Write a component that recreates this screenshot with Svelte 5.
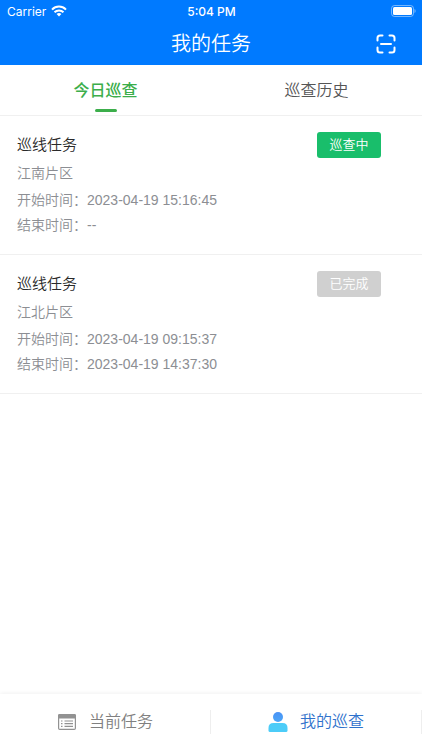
<script>
    let activeTab = 'today';
    let activeNav = 'patrol';

    const tabs = [
        { id: 'today', label: '今日巡查' },
        { id: 'history', label: '巡查历史' }
    ];

    const tasks = [
        { area: '江南片区', start: '2023-04-19 15:16:45', end: '--', done: false },
        { area: '江北片区', start: '2023-04-19 09:15:37', end: '2023-04-19 14:37:30', done: true }
    ];
</script>

<div class="page">
    <header>
        <div class="status">
            <div class="carrier">
                <span>Carrier</span>
                <svg width="16" height="12" viewBox="0 0 16 12" fill="none" stroke="#fff" stroke-width="2">
                    <path d="M1 4.6C5 .6 11 .6 15 4.6" />
                    <path d="M3.5 7.3C6 4.8 10 4.8 12.5 7.3" />
                    <path d="M8 11.5L5.6 9C7 7.7 9 7.7 10.4 9Z" fill="#fff" stroke="none" />
                </svg>
            </div>
            <span class="clock">5:04 PM</span>
            <div class="battery">
                <svg width="25" height="12" viewBox="0 0 25 12">
                    <rect x=".5" y=".5" width="22" height="11" rx="3" fill="none" stroke="#fff" stroke-opacity=".45" />
                    <rect x="2" y="2" width="19" height="8" rx="1.5" fill="#fff" />
                    <path d="M23.5 4C25 4.6 25 7.4 23.5 8Z" fill="#fff" fill-opacity=".5" />
                </svg>
            </div>
        </div>
        <div class="titlebar">
            <h1>我的任务</h1>
            <button class="scan" aria-label="扫一扫">
                <svg width="20" height="20" viewBox="0 0 20 20" fill="none" stroke="#fff" stroke-width="2" stroke-linecap="round">
                    <path d="M1.5 6.5V4Q1.5 1.5 4 1.5H6.5M13.5 1.5H16Q18.5 1.5 18.5 4V6.5M18.5 13.5V16Q18.5 18.5 16 18.5H13.5M6.5 18.5H4Q1.5 18.5 1.5 16V13.5M5 10H15" />
                </svg>
            </button>
        </div>
    </header>

    <div class="tabs">
        {#each tabs as tab}
            <button class="tab" class:active={activeTab === tab.id} on:click={() => activeTab = tab.id}>{tab.label}</button>
        {/each}
    </div>

    <main>
        {#each tasks as task}
            <section class="task">
                <div class="info">
                    <h2>巡线任务</h2>
                    <p class="area">{task.area}</p>
                    <p>开始时间：{task.start}</p>
                    <p>结束时间：{task.end}</p>
                </div>
                <span class="badge" class:done={task.done}>{task.done ? '已完成' : '巡查中'}</span>
            </section>
        {/each}
    </main>

    <nav>
        <button class="navbtn" class:active={activeNav === 'current'} on:click={() => activeNav = 'current'}>
            <svg width="20" height="20" viewBox="0 0 20 20">
                <rect x="1.6" y="2.6" width="16.8" height="14.8" rx="1.2" fill="none" stroke="#929292" stroke-width="1.2" />
                <path d="M1 6.5V3.5Q1 2 2.5 2H17.5Q19 2 19 3.5V6.5Z" fill="#929292" />
                <path d="M4 9H5.5M7.5 9H16M4 11.7H5.5M7.5 11.7H16M4 14.4H5.5M7.5 14.4H16" stroke="#929292" stroke-width="1.2" />
            </svg>
            <span>当前任务</span>
        </button>
        <button class="navbtn" class:active={activeNav === 'patrol'} on:click={() => activeNav = 'patrol'}>
            <svg width="20" height="20" viewBox="0 0 20 20">
                <defs>
                    <linearGradient id="head" x1="0" y1="0" x2="0" y2="1">
                        <stop offset="0" stop-color="#4a92f5" />
                        <stop offset="1" stop-color="#4aa6f8" />
                    </linearGradient>
                </defs>
                <circle cx="10" cy="5" r="5" fill="url(#head)" />
                <path d="M.5 18.5V16Q.5 11 5.5 11H14.5Q19.5 11 19.5 16V18.5Q19.5 20 18 20H2Q.5 20 .5 18.5Z" fill="#4cccf8" />
            </svg>
            <span>我的巡查</span>
        </button>
    </nav>
</div>

<style>
    :global(body) {
        margin: 0;
        background: #fff;
    }

    .page {
        min-height: 100vh;
        display: flex;
        flex-direction: column;
        font-family: "Liberation Sans", "Noto Sans CJK SC", sans-serif;
        font-weight: 350;
        color: #2a2a2a;
    }

    button {
        border: none;
        background: none;
        padding: 0;
        font-family: inherit;
        font-weight: inherit;
        cursor: pointer;
    }

    svg {
        display: block;
    }

    h1, h2, p {
        margin: 0;
        font-weight: inherit;
    }

    header {
        background: #007aff;
        color: #fff;
    }

    /* Phone status bar */
    .status {
        display: grid;
        grid-template-columns: 1fr auto 1fr;
        align-items: center;
        height: 22px;
        padding: 0 6px 0 7px;
        font-family: Inter, sans-serif;
        font-size: 12px;
        font-weight: 400;
    }

    .carrier {
        display: flex;
        align-items: center;
        gap: 5px;
    }

    .clock {
        font-weight: 500;
    }

    .battery {
        justify-self: end;
    }

    .titlebar {
        display: grid;
        grid-template-columns: 1fr auto 1fr;
        align-items: center;
        height: 43px;
        padding: 0 26px;
    }

    h1 {
        grid-column: 2;
        font-size: 20px;
        line-height: 28px;
    }

    .scan {
        justify-self: end;
    }

    .tabs {
        display: flex;
        height: 50px;
        border-bottom: 1px solid #f0f0f0;
    }

    .tab {
        flex: 1;
        display: flex;
        flex-direction: column;
        align-items: center;
        padding-top: 14px;
        font-size: 16px;
        line-height: 24px;
        color: #555;
    }

    .tab.active {
        color: #3cae4b;
        font-weight: 500;
    }

    .tab.active::after {
        content: "";
        width: 22px;
        height: 3px;
        margin-top: 6px;
        border-radius: 2px;
        background: #3cae4b;
    }

    main {
        flex: 1;
    }

    .task {
        display: flex;
        justify-content: space-between;
        align-items: flex-start;
        padding: 16px 41px 16px 17px;
        border-bottom: 1px solid #f0f0f0;
    }

    h2 {
        font-size: 15px;
        line-height: 25px;
    }

    .info p {
        font-size: 14px;
        line-height: 25px;
        color: #8c8e93;
    }

    .info .area {
        padding: 4px 0 2px;
    }

    .badge {
        width: 64px;
        border-radius: 3px;
        background: #19be6b;
        color: #fff;
        font-size: 13px;
        line-height: 26px;
        text-align: center;
    }

    .badge.done {
        background: #d0d0d0;
    }

    nav {
        display: flex;
        align-items: center;
        height: 56px;
        box-shadow: 0 -1px 4px rgba(0, 0, 0, 0.06);
    }

    .navbtn {
        flex: 1;
        display: flex;
        align-items: center;
        justify-content: center;
        gap: 12px;
        height: 24px;
        border-right: 1px solid #eee;
        font-size: 16px;
        line-height: 22px;
        color: #808080;
    }

    .navbtn.active {
        color: #2f72cc;
    }
</style>
